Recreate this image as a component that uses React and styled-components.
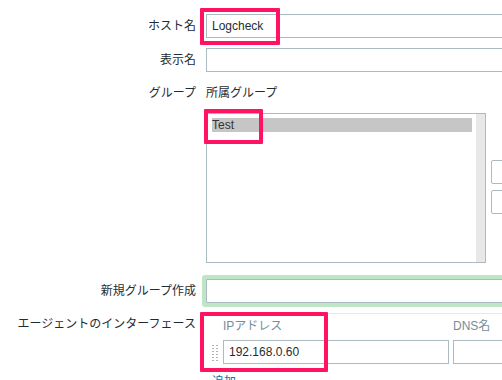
import React from 'react';
import styled, { createGlobalStyle } from 'styled-components';

const GlobalStyle = createGlobalStyle`
  html, body {
    margin: 0;
    padding: 0;
    background: #ffffff;
    overflow: hidden;
  }
  body {
    font-family: "Liberation Sans", Arial, "Noto Sans CJK JP", sans-serif;
    font-size: 12px;
    color: #1f2c33;
  }
`;

const Page = styled.div`
  position: relative;
  width: 502px;
  height: 380px;
  overflow: hidden;
`;

const Row = styled.div`
  display: grid;
  grid-template-columns: 196px 1fr;
  column-gap: 10px;
  align-items: ${(p) => (p.$top ? 'start' : 'center')};
  margin-top: ${(p) => p.$mt || 0}px;
`;

const Label = styled.div`
  text-align: right;
  line-height: 14px;
  white-space: nowrap;
  padding-top: ${(p) => p.$pt || 0}px;
`;

const Field = styled.div`
  min-width: 0;
`;

const TextInput = styled.input`
  box-sizing: border-box;
  display: block;
  flex-shrink: 0;
  width: ${(p) => p.$w || 320}px;
  height: 24px;
  margin: 0;
  padding: 0 5px;
  border: 1px solid #acbbc2;
  border-radius: ${(p) => (p.$glow ? '1px' : '0')};
  background: #ffffff;
  font-family: inherit;
  font-size: 12px;
  color: #1f2c33;
  outline: none;
  box-shadow: ${(p) => (p.$glow ? '0 0 0 4px #bde5c6' : 'none')};
`;

const SubHeader = styled.div`
  line-height: 14px;
`;

const ListArea = styled.div`
  display: flex;
  align-items: flex-start;
  gap: 5px;
  margin-top: 13px;
`;

const ListBox = styled.div`
  box-sizing: border-box;
  flex-shrink: 0;
  width: 280px;
  height: 150px;
  border: 1px solid #acbbc2;
  display: flex;
  background: #ffffff;
`;

const ListItems = styled.div`
  flex: 1;
  padding: 4px 4px 0 5px;
`;

const ListOption = styled.div`
  height: 14px;
  line-height: 14px;
  color: #333333;
  background: ${(p) => (p.$selected ? '#c6c6c6' : 'transparent')};
`;

const ScrollTrack = styled.div`
  width: 9px;
  background: #e8e8e8;
`;

const SideButtons = styled.div`
  display: flex;
  flex-shrink: 0;
  flex-direction: column;
  gap: 6px;
  padding-top: 47px;
`;

const SideButton = styled.div`
  box-sizing: border-box;
  width: 40px;
  height: 24px;
  border: 1px solid #acbbc2;
  border-radius: 2px;
  background: #ffffff;
`;

const IfaceTable = styled.div`
  margin-top: 10px;
  border-top: 1px solid #e6e9eb;
  padding-top: 5px;
`;

const IfaceGrid = styled.div`
  display: grid;
  grid-template-columns: 17px 230px 120px;
  row-gap: 7px;
  align-items: center;
`;

const ColHead = styled.div`
  line-height: 14px;
  color: #768d99;
  white-space: nowrap;
`;

const DragHandle = styled.div`
  width: 6px;
  height: 17px;
  margin-left: 6px;
  background-image: radial-gradient(circle, #aab4ba 0.9px, transparent 1.1px);
  background-size: 4px 3px;
  background-position: -1px 0;
`;

const AddLink = styled.div`
  margin-top: 11px;
  margin-left: 6px;
  line-height: 14px;
  color: #0275b8;
`;

const Mark = styled.div`
  position: absolute;
  box-sizing: border-box;
  border: 4px solid #ff1462;
  border-radius: 1px;
  pointer-events: none;
`;

export default function App() {
  return (
    <>
      <GlobalStyle />
      <Page>
        <Row $mt={14}>
          <Label>ホスト名</Label>
          <Field>
            <TextInput defaultValue="Logcheck" readOnly />
          </Field>
        </Row>

        <Row $mt={10}>
          <Label>表示名</Label>
          <Field>
            <TextInput defaultValue="" readOnly />
          </Field>
        </Row>

        <Row $mt={14} $top>
          <Label>グループ</Label>
          <Field>
            <SubHeader>所属グループ</SubHeader>
            <ListArea>
              <ListBox>
                <ListItems>
                  <ListOption $selected>Test</ListOption>
                </ListItems>
                <ScrollTrack />
              </ListBox>
              <SideButtons>
                <SideButton />
                <SideButton />
              </SideButtons>
            </ListArea>
          </Field>
        </Row>

        <Row $mt={16}>
          <Label>新規グループ作成</Label>
          <Field>
            <TextInput $glow defaultValue="" readOnly />
          </Field>
        </Row>

        <Row $top>
          <Label $pt={14}>エージェントのインターフェース</Label>
          <Field>
            <IfaceTable>
              <IfaceGrid>
                <span />
                <ColHead>IPアドレス</ColHead>
                <ColHead>DNS名</ColHead>
                <DragHandle />
                <TextInput $w={226} defaultValue="192.168.0.60" readOnly />
                <TextInput $w={120} defaultValue="" readOnly />
              </IfaceGrid>
              <AddLink>追加</AddLink>
            </IfaceTable>
          </Field>
        </Row>

        <Mark style={{ left: 200, top: 8, width: 80, height: 37 }} />
        <Mark style={{ left: 204, top: 109, width: 59, height: 35 }} />
        <Mark style={{ left: 200, top: 312, width: 128, height: 60 }} />
      </Page>
    </>
  );
}
